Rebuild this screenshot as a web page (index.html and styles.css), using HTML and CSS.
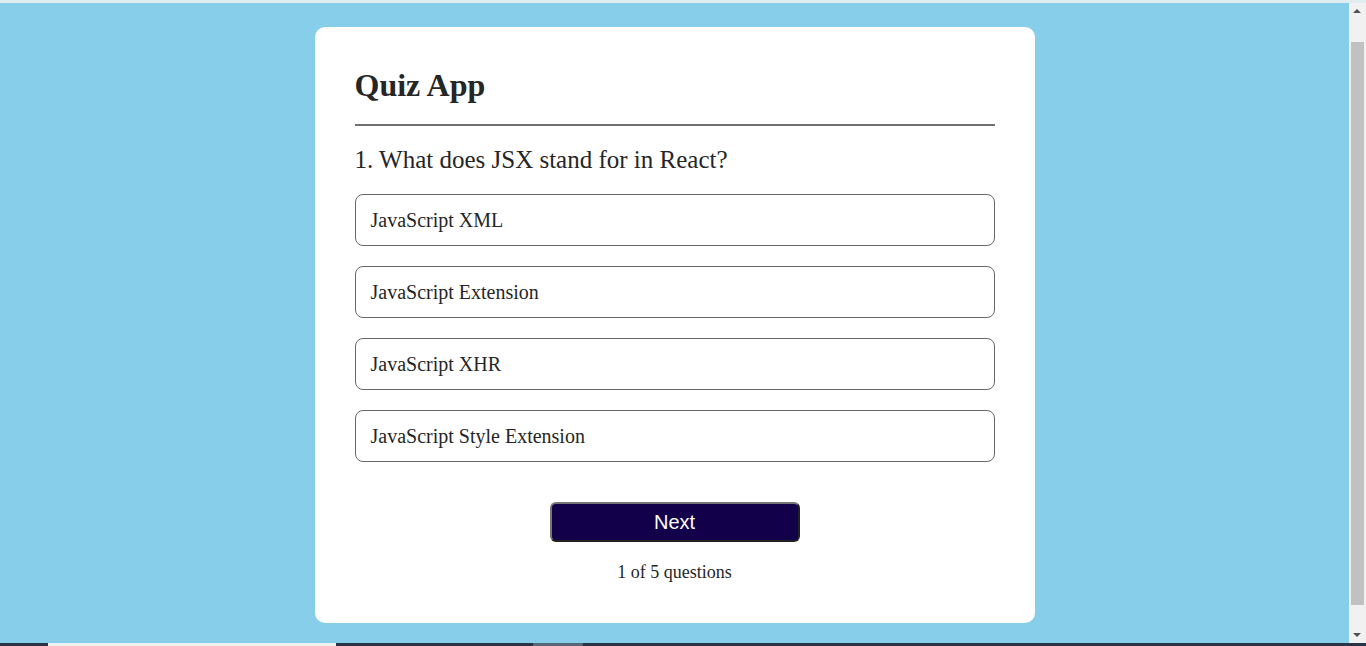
FILE: index.html
```html
<!DOCTYPE html>
<html lang="en">
<head>
<meta charset="utf-8">
<title>Quiz App</title>
<link rel="stylesheet" href="styles.css">
</head>
<body>
<div class="top-strip"></div>
<div class="viewport">
  <main class="page">
    <div class="container">
      <h1>Quiz App</h1>
      <hr>
      <h2>1. What does JSX stand for in React?</h2>
      <ul>
        <li>JavaScript XML</li>
        <li>JavaScript Extension</li>
        <li>JavaScript XHR</li>
        <li>JavaScript Style Extension</li>
      </ul>
      <button>Next</button>
      <div class="index">1 of 5 questions</div>
    </div>
  </main>
  <div class="scrollbar">
    <div class="arrow up"></div>
    <div class="track"><div class="thumb"></div></div>
    <div class="arrow down"></div>
  </div>
</div>
<div class="taskbar">
  <div class="tb-a"></div>
  <div class="tb-b"></div>
  <div class="tb-c"></div>
  <div class="tb-d"></div>
  <div class="tb-e"></div>
</div>
</body>
</html>
```

FILE: styles.css
```css
* { box-sizing: border-box; }
html, body { margin: 0; padding: 0; }
body {
  width: 1366px;
  height: 646px;
  overflow: hidden;
  display: flex;
  flex-direction: column;
  background: #87ceeb;
  font-family: "Liberation Serif", "Times New Roman", serif;
}
.top-strip { height: 3px; background: #e1ecf0; flex: none; }
.viewport { flex: 1; display: flex; min-height: 0; }
.page { flex: 1; background: #87ceeb; overflow: hidden; }
.container {
  width: 720px;
  margin: 24px auto 0;
  background: #fff;
  color: #262626;
  border-radius: 10px;
  padding: 40px 40px;
  display: flex;
  flex-direction: column;
  gap: 20px;
}
.container h1 { margin: 0; font-size: 32px; font-weight: bold; }
.container hr { margin: 0; height: 2px; border: none; background: #707070; }
.container h2 { margin: 0; font-size: 25px; font-weight: normal; }
.container ul { margin: 0; padding: 0; list-style: none; }
.container li {
  display: flex;
  align-items: center;
  height: 52px;
  padding-left: 15px;
  border: 1px solid #686868;
  border-radius: 8px;
  margin-bottom: 20px;
  font-size: 20px;
}
.container button {
  margin: 0 auto;
  width: 250px;
  height: 40px;
  background: #13004a;
  color: #fff;
  font-family: "Liberation Sans", Arial, sans-serif;
  font-size: 20px;
  border: 2px outset #767676;
  border-radius: 6px;
  padding: 0;
}
.container .index { margin: 0 auto; font-size: 18px; }
.scrollbar {
  width: 17px;
  flex: none;
  background: #f1f1f1;
  display: flex;
  flex-direction: column;
}
.arrow { height: 17px; flex: none; position: relative; }
.arrow::after {
  content: "";
  position: absolute;
  left: 4px;
  width: 0; height: 0;
  border-left: 4px solid transparent;
  border-right: 4px solid transparent;
}
.arrow.up::after { top: 6px; border-bottom: 4px solid #505050; }
.arrow.down::after { top: 7px; border-top: 4px solid #505050; }
.track { flex: 1; padding: 22px 2px 21px; display: flex; }
.thumb { flex: 1; background: #c1c1c1; }
.taskbar { height: 3px; flex: none; display: flex; }
.tb-a { width: 48px; background: #263445; }
.tb-b { width: 288px; background: #eef0f2; }
.tb-c { width: 197px; background: #263445; }
.tb-d { width: 50px; background: #56677a; }
.tb-e { flex: 1; background: #263445; }
```
